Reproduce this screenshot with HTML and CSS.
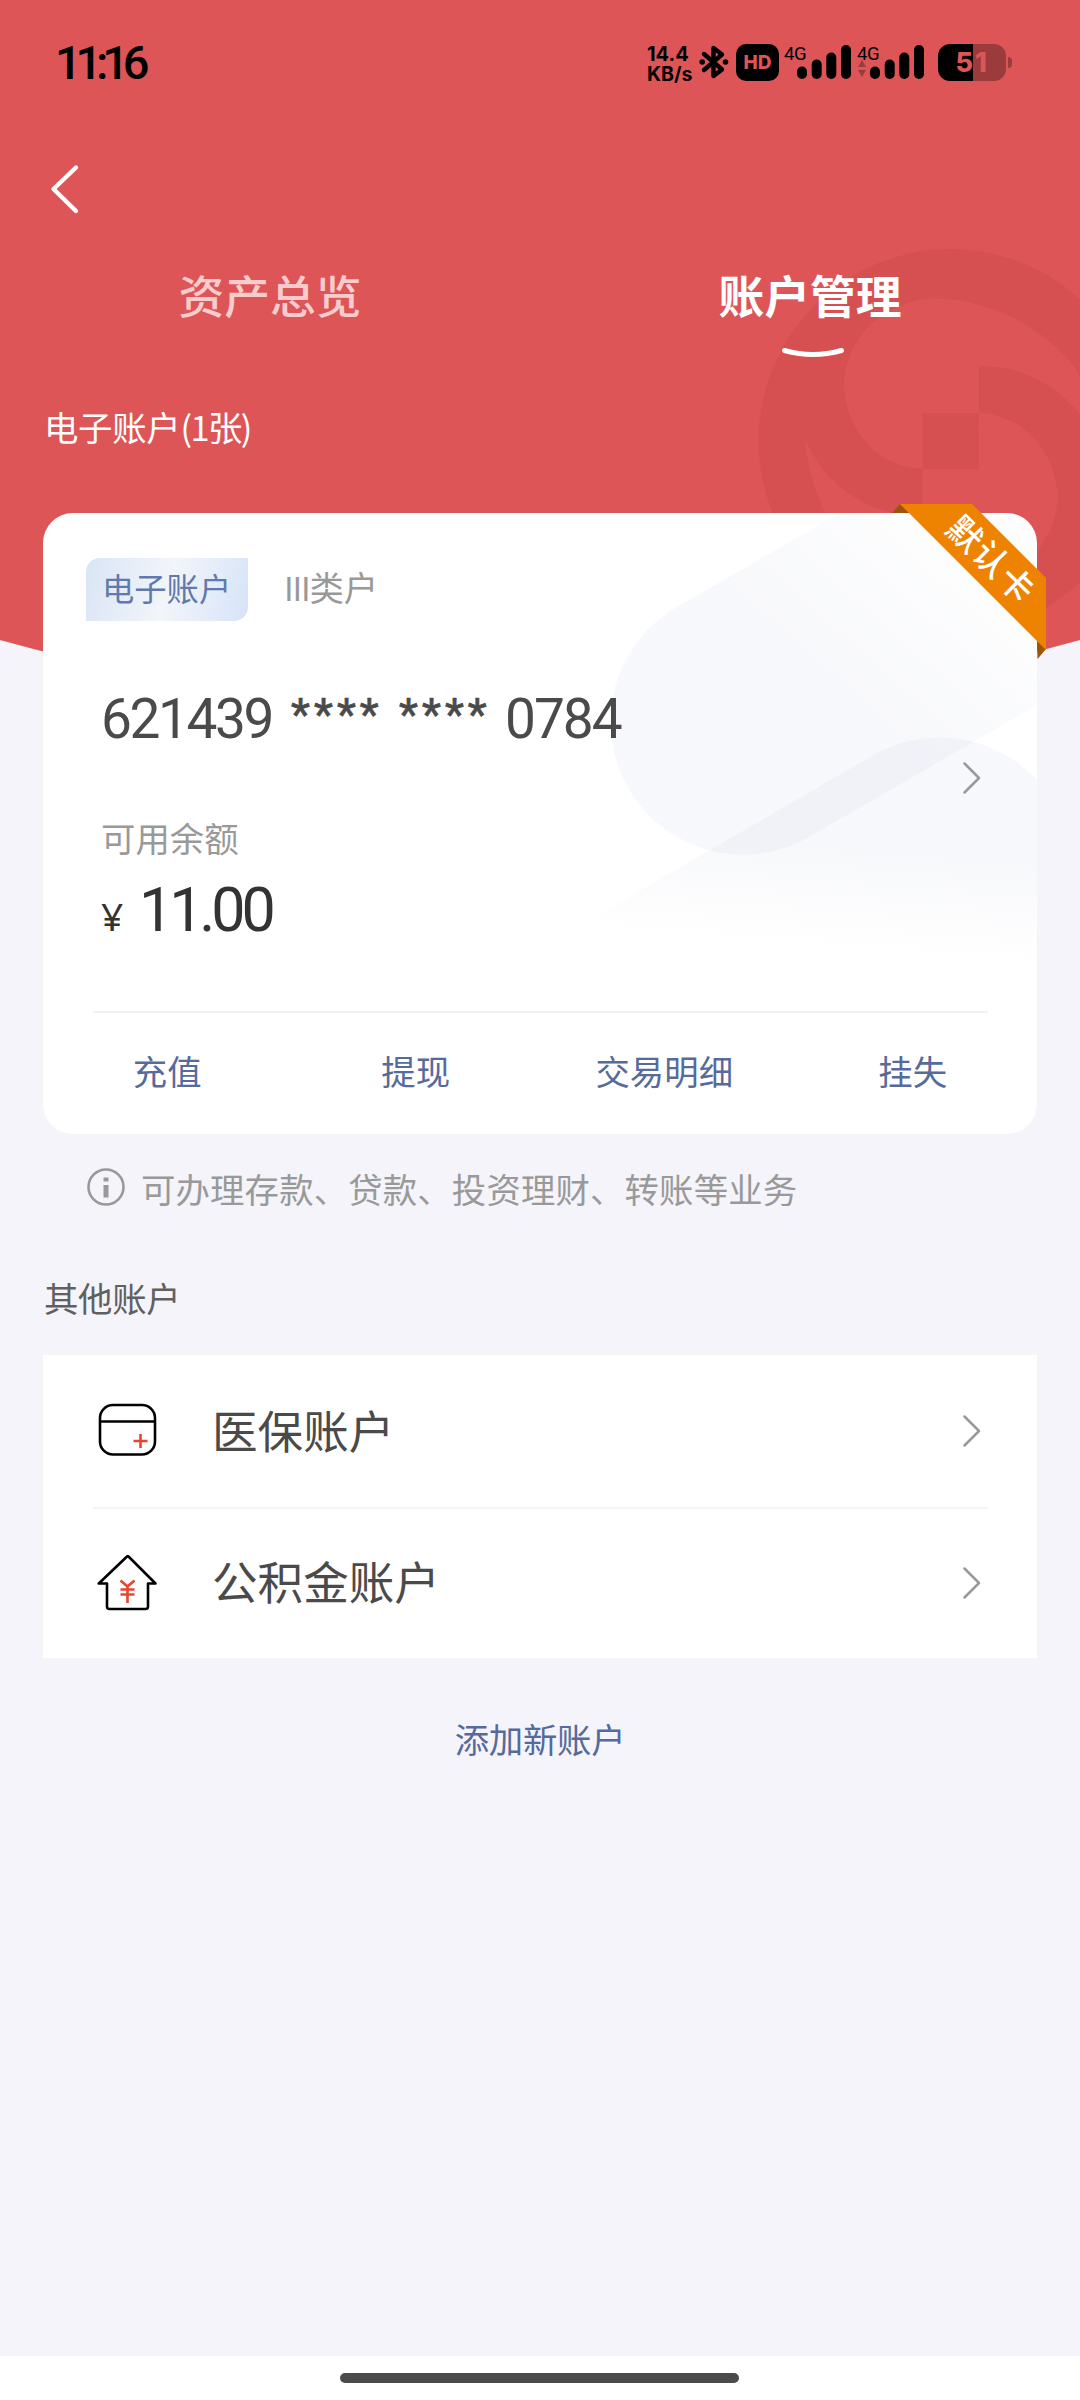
FILE: index.html
```html
<!DOCTYPE html>
<html lang="zh-CN">
<head>
<meta charset="utf-8">
<title>账户管理</title>
<link rel="stylesheet" href="styles.css">
</head>
<body>
<div class="screen">
  <svg class="backdrop" width="1080" height="760" viewBox="0 0 1080 760" aria-hidden="true">
    <defs>
      <clipPath id="hero"><path d="M0 0H1080V640Q540 790 0 640Z"/></clipPath>
    </defs>
    <g clip-path="url(#hero)">
      <rect width="1080" height="760" fill="#dd5556"/>
      <circle cx="950.5" cy="441" r="192" fill="#d75051"/>
      <g fill="#dd5556">
        <path d="M922.500 469A80 86 0 0 1 844 384A92 88 0 0 1 935 298.500A185 185 0 0 1 1076 369A190 190 0 0 1 1096 442A125 125 0 0 0 979 366V413H922.500Z"/>
        <path transform="rotate(180 950.700 441)" d="M922.500 469A80 86 0 0 1 844 384A92 88 0 0 1 935 298.500A185 185 0 0 1 1076 369A190 190 0 0 1 1096 442A125 125 0 0 0 979 366V413H922.500Z"/>
      </g>
    </g>
  </svg>

  <header class="status">
    <span class="clock">11:16</span>
    <div class="indicators">
      <div class="speed"><span class="rate">14.4</span><span class="unit">KB/s</span></div>
      <svg class="bluetooth" width="30" height="36" viewBox="0 0 30 36"><path d="M5 10L23 25.500L14.500 32V4L23 10.500L5 26" fill="none" stroke="#000" stroke-width="4.400" stroke-linejoin="round" stroke-linecap="round"/><circle cx="3.200" cy="18" r="2.800"/><circle cx="26.500" cy="18" r="2.800"/></svg>
      <span class="hd">HD</span>
      <div class="signal">
        <span class="net">4G</span>
        <svg width="68" height="37" viewBox="0 0 68 37"><rect x="13" y="22.500" width="10" height="12.500" rx="5"/><rect x="27.700" y="15.500" width="10" height="19.500" rx="5"/><rect x="42.300" y="8.500" width="10" height="26.500" rx="5"/><rect x="57" y="1" width="10" height="34" rx="5"/></svg>
      </div>
      <div class="signal">
        <span class="net">4G</span>
        <svg width="68" height="37" viewBox="0 0 68 37"><path d="M5 16L9 23H1ZM5 33L9 26H1Z" fill="#000" opacity=".3"/><rect x="13" y="22.500" width="10" height="12.500" rx="5"/><rect x="27.700" y="15.500" width="10" height="19.500" rx="5"/><rect x="42.300" y="8.500" width="10" height="26.500" rx="5"/><rect x="57" y="1" width="10" height="34" rx="5"/></svg>
      </div>
      <div class="battery"><span class="level"><b class="on">5</b><b class="off">1</b></span><i class="nub"></i></div>
    </div>
  </header>

  <nav class="navbar">
    <svg width="32" height="52" viewBox="0 0 32 52"><path d="M28 4.500L5.500 26L28 48" fill="none" stroke="#fff" stroke-width="4.400" stroke-linecap="round" stroke-linejoin="round"/></svg>
  </nav>

  <div class="tabs">
    <div class="tab"><span>资产总览</span></div>
    <div class="tab active"><span>账户管理</span>
      <svg class="underline" width="64" height="14" viewBox="0 0 64 14"><path d="M3.500 4.500Q32 12.500 60.500 4.500" fill="none" stroke="#fff" stroke-width="5" stroke-linecap="round"/></svg>
    </div>
  </div>

  <h2 class="section-title light">电子账户<span class="count">(1张)</span></h2>

  <section class="card">
    <svg class="deco" width="994" height="621" viewBox="43 513 994 621" aria-hidden="true">
      <defs>
        <linearGradient id="g1" gradientUnits="userSpaceOnUse" x1="830" y1="680" x2="950" y2="545"><stop offset="0" stop-color="#2a4090" stop-opacity=".035"/><stop offset="1" stop-color="#2a4090" stop-opacity=".008"/></linearGradient>
        <linearGradient id="g2" gradientUnits="userSpaceOnUse" x1="850" y1="850" x2="842" y2="950"><stop offset="0" stop-color="#2a4090" stop-opacity=".035"/><stop offset="1" stop-color="#2a4090" stop-opacity="0"/></linearGradient>
      </defs>
      <path d="M1037 399L677 607A132.500 132.500 0 0 0 809 837L1037 705Z" fill="url(#g1)"/>
      <path d="M500 972L872 756A133 133 0 0 1 1037 780V972Z" fill="url(#g2)"/>
    </svg>
    <div class="tags"><span class="tag">电子账户</span><span class="kind"><i class="roman">III</i>类户</span></div>
    <div class="number"><span class="digits head">621439</span><span class="stars">****</span><span class="stars">****</span><span class="digits tail">0784</span></div>
    <div class="label">可用余额</div>
    <div class="amount"><span class="yen">¥</span><span class="value">11.00</span></div>
    <div class="actions"><span>充值</span><span>提现</span><span>交易明细</span><span>挂失</span></div>
    <svg class="chevron card-chevron" width="20" height="34" viewBox="0 0 20 34"><path d="M2.500 2.500L17 17L2.500 31.500" fill="none" stroke="#999" stroke-width="2.500" stroke-linecap="round" stroke-linejoin="round"/></svg>
    <div class="ribbon">
      <svg width="155" height="156" viewBox="892 504 155 156"><path d="M892 513L900 504L909 513ZM1037 641L1046 649L1037.500 659Z" fill="#9c5408"/><path d="M900 504H972L1046 578V650Z" fill="#ee8302"/></svg>
      <span class="ribbon-text">默认卡</span>
    </div>
  </section>

  <div class="notice">
    <svg width="40" height="40" viewBox="0 0 40 40"><circle cx="20" cy="19" r="17.500" fill="none" stroke="#999" stroke-width="2.600"/><path d="M17.500 9.500h5v4h-5zM17.500 17h5v12.500h-5z" fill="#999"/></svg>
    <span>可办理存款、贷款、投资理财、转账等业务</span>
  </div>

  <h2 class="section-title dark">其他账户</h2>

  <ul class="list">
    <li class="row">
      <svg class="row-icon" width="60" height="60" viewBox="0 0 60 60"><rect x="3" y="4" width="55" height="49.500" rx="13" fill="none" stroke="#000" stroke-width="2.600"/><path d="M3 20.500H58" stroke="#000" stroke-width="2.600"/><path d="M36.500 40h14M43.500 33v14" stroke="#e8442f" stroke-width="2.600"/></svg>
      <span class="row-name">医保账户</span>
      <svg class="chevron" width="20" height="34" viewBox="0 0 20 34"><path d="M2.500 2.500L17 17L2.500 31.500" fill="none" stroke="#999" stroke-width="2.500" stroke-linecap="round" stroke-linejoin="round"/></svg>
    </li>
    <li class="row">
      <svg class="row-icon" width="60" height="60" viewBox="0 0 60 60"><path d="M30 3.500L1.800 30.500H10V53.500Q10 56 12.500 56H48.500Q51 56 51 53.500V30.500H58.500L31.500 3.500Q30.700 2.800 30 3.500Z" fill="none" stroke="#000" stroke-width="2.600" stroke-linejoin="round"/><path d="M23.500 27.500L30.500 33.500L37.500 27.500M30.500 33.500V50M23.500 36.500h14M23.500 41.500h14" fill="none" stroke="#e8442f" stroke-width="2.600"/></svg>
      <span class="row-name">公积金账户</span>
      <svg class="chevron" width="20" height="34" viewBox="0 0 20 34"><path d="M2.500 2.500L17 17L2.500 31.500" fill="none" stroke="#999" stroke-width="2.500" stroke-linecap="round" stroke-linejoin="round"/></svg>
    </li>
  </ul>

  <a class="add">添加新账户</a>

  <footer class="home"><span class="pill"></span></footer>
</div>
</body>
</html>
```
FILE: styles.css
```css
* { box-sizing: border-box; }
body { margin: 0; background: #f4f4fa; }
svg { display: block; }

.screen {
  position: relative;
  display: flex;
  flex-direction: column;
  width: 1080px;
  height: 2400px;
  overflow: hidden;
  background: #f4f4fa;
  font-family: "Noto Sans CJK SC", sans-serif;
  font-size: 34.4px;
  line-height: 44px;
}
.backdrop { position: absolute; left: 0; top: 0; }
.status, .navbar, .tabs, .section-title, .card { position: relative; }

/* status bar */
.status {
  display: flex;
  justify-content: space-between;
  height: 126px;
  padding: 0 68px 0 55px;
  font-family: Roboto, sans-serif;
  color: #000;
}
.clock {
  padding-top: 36px;
  font-size: 47px;
  line-height: 54px;
  font-weight: 500;
  letter-spacing: -6.2px;
}
.indicators { display: flex; align-items: flex-start; padding-top: 44px; }
.speed {
  display: flex;
  flex-direction: column;
  width: 52px;
  font-family: Inter, sans-serif;
  font-weight: 700;
  font-size: 20px;
  line-height: 19px;
  white-space: nowrap;
}
.rate { height: 20px; padding-top: 1px; }
.unit { font-size: 19.5px; line-height: 20px; }
.bluetooth { margin-right: 7px; }
.hd {
  width: 43px;
  height: 37px;
  margin-right: 5px;
  border-radius: 10px;
  background: #000;
  color: #dd5556;
  font: 800 19px/37px Inter, sans-serif;
  text-align: center;
}
.signal { position: relative; margin-right: 5px; }
.signal + .signal { margin-right: 13px; }
.net {
  position: absolute;
  left: 0;
  top: 1px;
  font-size: 18.5px;
  line-height: 18px;
  letter-spacing: -0.5px;
}
.battery { display: flex; align-items: center; gap: 2px; }
.level {
  display: flex;
  width: 68px;
  height: 37px;
  border-radius: 12px;
  overflow: hidden;
  background: linear-gradient(90deg, #000 35px, #9a3b3c 35px);
  font: 800 27px/38px Inter, sans-serif;
  color: #dd5556;
}
.level b { font-weight: 800; }
.on { width: 35px; text-align: right; }
.off { padding-left: 2px; color: #dd5556; }
.nub { width: 4px; height: 11px; border-radius: 0 4px 4px 0; background: #9a3b3c; }

/* header */
.navbar { height: 126px; padding: 37px 0 0 48px; }
.tabs { display: flex; height: 111px; padding-top: 12px; }
.tab {
  display: flex;
  flex-direction: column;
  align-items: center;
  flex: 1;
  font-size: 45.8px;
  line-height: 60px;
  font-weight: 500;
  color: #f8cccd;
}
.tab.active { color: #fff; font-weight: 700; }
.underline { margin: 22px 0 0 5px; }

.section-title { margin: 0 0 0 44px; font-size: 34.4px; line-height: 44px; font-weight: 400; }
.section-title.light { margin-top: 41px; color: #fff; letter-spacing: -0.3px; }
.section-title.dark { margin-top: 65px; color: #606060; letter-spacing: -0.3px; }
.count { letter-spacing: -1.6px; }

/* account card */
.card {
  height: 621px;
  margin: 65px 43px 0;
  padding-top: 45px;
  border-radius: 30px;
  background: #fff;
}
.deco { position: absolute; left: 0; top: 0; border-radius: 30px; }
.tags, .number, .label, .amount, .actions { position: relative; display: flex; }
.tags { height: 63px; padding-left: 43px; gap: 36px; }
.tag {
  width: 162px;
  padding-left: 16px;
  border-radius: 14px 0 14px 0;
  background: linear-gradient(105deg, #d9e5f5, #f2f5fa 50%, #d6e4f7);
  color: #6279ab;
  font-size: 32.3px;
  line-height: 59px;
}
.kind { color: #999; line-height: 56px; }
.roman { font-style: normal; font-size: 33px; letter-spacing: -1.2px; }
.number {
  margin-top: 66px;
  padding-left: 58px;
  height: 64px;
  font-family: Roboto, sans-serif;
  font-size: 55px;
  line-height: 64px;
  color: #4a4a4a;
}
.digits { letter-spacing: -2.4px; }
.tail { margin-left: -2px; letter-spacing: -2px; }
.head { width: 190px; }
.stars { width: 108px; font-size: 44px; line-height: 57px; letter-spacing: 4px; -webkit-text-stroke: 0.7px #4a4a4a; }
.label { margin-top: 64px; padding-left: 58px; color: #999; }
.amount {
  align-items: baseline;
  height: 70px;
  margin-top: 16px;
  padding-left: 58px;
  font-family: Roboto, sans-serif;
  line-height: 70px;
  color: #333;
}
.yen { width: 38px; font-family: "Noto Sans", sans-serif; font-size: 39px; }
.value { font-size: 61px; letter-spacing: -4.1px; }
.actions {
  height: 123px;
  margin-top: 66px;
  padding-top: 37px;
  color: #566a9c;
}
.actions::before {
  content: "";
  position: absolute;
  left: 50px;
  right: 49px;
  top: 0;
  height: 2px;
  background: #f1f2f5;
}
.actions span { flex: 1; text-align: center; }
.card-chevron { position: absolute; right: 55px; top: 248px; }
.ribbon { position: absolute; left: 849px; top: -9px; }
.ribbon-text {
  position: absolute;
  left: 101px;
  top: 54px;
  width: 120px;
  margin: -22px 0 0 -60px;
  color: #fff;
  font-size: 34.4px;
  font-weight: 500;
  letter-spacing: 1.5px;
  line-height: 44px;
  text-align: center;
  white-space: nowrap;
  transform: rotate(44.5deg);
}

/* notice and other accounts */
.notice {
  display: flex;
  align-items: center;
  gap: 15px;
  height: 44px;
  margin-top: 32px;
  padding-left: 86px;
  color: #999;
  letter-spacing: 0.15px;
}
.list { margin: 36px 43px 0; padding: 0; list-style: none; background: #fff; }
.row { display: flex; align-items: center; position: relative; height: 151px; padding: 0 55px 0 54px; }
.row:first-child { height: 152px; }
.row + .row::before {
  content: "";
  position: absolute;
  left: 50px;
  right: 49px;
  top: 0;
  height: 2px;
  background: #f4f4f7;
}
.row-name { flex: 1; margin: -5px 0 0 55px; font-size: 45.6px; line-height: 60px; color: #4a4a4a; }
.add { margin-top: 58px; text-align: center; color: #566a9c; letter-spacing: -0.3px; }

.home {
  display: flex;
  justify-content: center;
  height: 44px;
  margin-top: auto;
  padding: 17px 2px 0 0;
  background: #fff;
}
.pill { width: 399px; height: 10px; border-radius: 5px; background: #4b4b4b; }
```
